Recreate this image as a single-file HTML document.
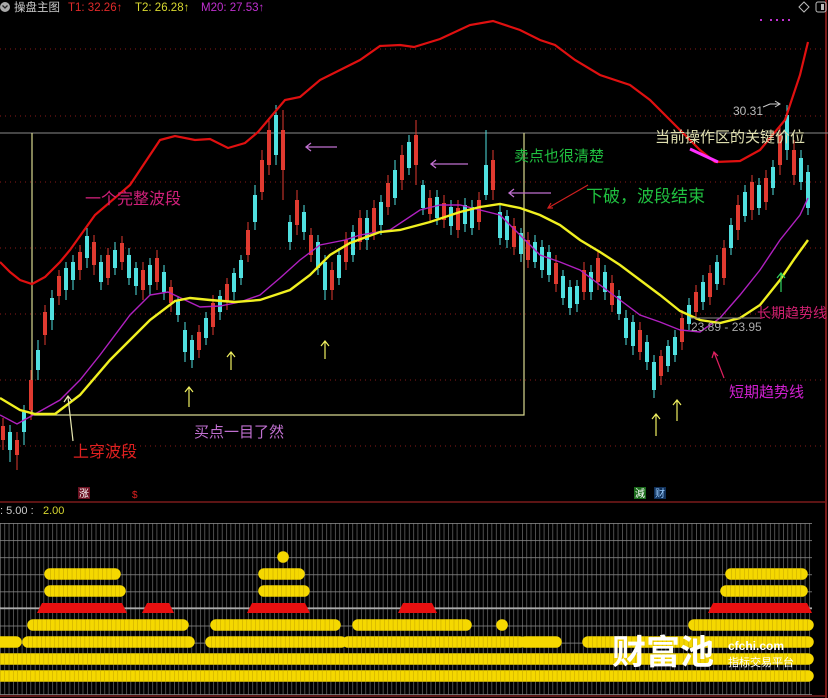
<!DOCTYPE html>
<html><head><meta charset="utf-8"><style>
html,body{margin:0;padding:0;background:#000;width:828px;height:698px;overflow:hidden}
svg{display:block}
text{font-family:"Liberation Sans","Noto Sans CJK SC",sans-serif}
</style></head><body>
<svg width="828" height="698" viewBox="0 0 828 698" xmlns="http://www.w3.org/2000/svg">
<defs>
<pattern id="gp" x="0" y="523" width="4.35" height="17.1" patternUnits="userSpaceOnUse">
<rect width="4.35" height="17.1" fill="#000"/>
<line x1="0.3" y1="0" x2="0.3" y2="17.1" stroke="#777" stroke-width="0.7"/>
<line x1="0" y1="0.4" x2="4.35" y2="0.4" stroke="#888" stroke-width="0.8"/>
</pattern>
</defs>
<rect width="828" height="698" fill="#000"/>
<g stroke="#8a1a1a" stroke-width="1" stroke-dasharray="1,4">
<line x1="0" y1="49" x2="826" y2="49"/><line x1="0" y1="116" x2="826" y2="116"/>
<line x1="0" y1="182" x2="826" y2="182"/><line x1="0" y1="248" x2="826" y2="248"/>
<line x1="0" y1="314" x2="826" y2="314"/><line x1="0" y1="380" x2="826" y2="380"/>
<line x1="0" y1="446" x2="826" y2="446"/>
</g>
<line x1="826" y1="0" x2="826" y2="698" stroke="#7a1a1a" stroke-width="2"/>
<line x1="0" y1="502" x2="826" y2="502" stroke="#7a1a1a" stroke-width="1.5"/>
<line x1="0" y1="696" x2="826" y2="696" stroke="#7a1a1a" stroke-width="1.5"/>
<line x1="0" y1="133" x2="828" y2="133" stroke="#8a8a8a" stroke-width="1"/>
<polyline points="32,133 32,415 524,415 524,133" stroke="#d8d890" stroke-width="1.2" fill="none"/>

<!-- candles: red -->
<g stroke="#e03a30">
<path stroke-width="1" d="M3,418V450M17,432V470M31,370V420M45,305V345M59,270V305M80,245V280M94,235V275M108,248V285M122,236V270M143,262V300M157,250V290M171,280V312M199,325V358M213,295V335M227,278V310M248,222V262M262,150V200M269,120V175M283,110V200M297,190V235M311,228V262M332,262V300M346,232V270M360,210V250M374,200V240M388,175V215M402,145V190M416,120V185M430,190V222M444,195V228M458,200V238M479,192V230M493,150V200M514,218V255M528,232V268M556,255V292M584,262V300M598,250V290M612,275V312M640,322V360M661,350V385M682,310V350M696,285V320M710,265V305M724,240V285M738,195V240M752,175V220M766,170V210M780,125V175M794,140V185"/>
<path stroke-width="4" d="M3,426V440M17,440V455M31,380V410M45,312V335M59,276V296M80,252V270M94,242V265M108,255V278M122,243V262M143,270V290M157,258V282M171,287V303M199,332V350M213,303V327M227,284V302M248,230V255M262,160V192M269,130V165M283,130V170M297,200V225M311,235V255M332,270V290M346,240V262M360,218V242M374,208V232M388,183V207M402,155V180M416,135V165M430,198V214M444,203V220M458,208V230M479,200V222M493,160V190M514,226V247M528,240V260M556,263V284M584,270V292M598,258V282M612,283V305M640,330V352M661,356V376M682,318V342M696,292V312M710,273V297M724,248V278M738,205V230M752,182V210M766,178V202M780,135V165M794,150V175"/>
</g>
<g stroke="#50e0e0">
<path stroke-width="1" d="M10,425V462M24,405V445M38,340V380M52,290V330M66,262V300M73,255V290M87,228V268M101,255V290M115,242V275M129,248V285M136,262V295M150,258V295M164,265V300M178,296V322M185,322V362M192,335V368M206,312V345M220,290V320M234,268V300M241,255V285M255,185V230M276,105V165M290,215V250M304,205V240M318,235V275M325,255V300M339,248V285M353,225V262M367,210V250M381,195V235M395,160V205M409,135V175M423,180V215M437,190V225M451,200V235M465,198V232M472,200V235M486,130V200M500,205V245M507,210V248M521,228V262M535,235V268M542,240V278M549,245V282M563,270V305M570,280V315M577,280V312M591,265V300M605,265V300M619,290V320M626,310V345M633,315V355M647,335V370M654,355V398M668,340V372M675,330V362M689,298V330M703,275V310M717,255V290M731,218V255M745,185V222M759,178V215M773,160V195M787,105V160M801,150V190M808,165V215"/>
<path stroke-width="4" d="M10,432V450M24,412V432M38,350V370M52,298V320M66,268V290M73,262V280M87,236V258M101,262V282M115,250V268M129,255V278M136,268V286M150,265V285M164,272V292M178,300V315M185,330V352M192,340V360M206,318V338M220,296V312M234,273V292M241,260V278M255,195V222M276,115V155M290,222V242M304,212V232M318,242V268M325,262V290M339,255V278M353,232V255M367,218V240M381,202V225M395,170V198M409,142V168M423,185V208M437,197V218M451,207V226M465,205V224M472,207V228M486,165V195M500,212V238M507,216V240M521,233V254M535,242V262M542,247V270M549,252V275M563,276V298M570,287V308M577,286V304M591,272V292M605,272V292M619,296V314M626,318V338M633,322V346M647,342V362M654,362V390M668,346V366M675,337V355M689,305V324M703,282V302M717,262V284M731,225V248M745,192V216M759,185V208M773,167V188M787,115V150M801,158V182M808,172V208"/>
</g>

<polyline fill="none" stroke="#e01010" stroke-width="2.2" points="0,262 10,272 20,280 32,284 45,277 60,262 70,250 95,215 130,185 160,140 175,136 195,140 210,139 228,148 245,143 258,132 285,100 300,97 320,80 360,60 380,46 400,45 414,47 440,39 470,25 493,21 520,30 540,40 555,45 575,60 600,75 630,85 650,100 680,130 700,150 715,162 740,161 760,150 785,120 800,75 808,42"/>
<polyline fill="none" stroke="#b020c0" stroke-width="1.4" points="0,415 17,424 35,414 60,400 80,380 100,355 130,315 150,295 168,292 185,300 200,307 220,306 240,302 260,295 280,278 300,260 320,245 345,240 360,235 390,230 420,210 440,205 460,205 480,210 500,215 520,235 540,255 560,262 580,270 600,285 620,300 640,315 660,322 680,330 700,332 720,318 740,295 760,270 780,240 800,215 808,198"/>
<polyline fill="none" stroke="#f0f020" stroke-width="2.4" points="0,398 20,410 35,414 55,414 80,395 110,360 150,320 175,301 190,298 210,300 235,302 260,300 290,290 310,275 330,255 350,243 380,232 400,230 430,222 460,212 480,207 500,204 520,208 540,215 560,225 580,240 600,252 620,265 640,280 660,295 680,311 700,320 720,323 740,318 760,305 780,280 795,258 808,240"/>

<g stroke="#f0f060" stroke-width="1.2" fill="none">
<path d="M189,407V387M185,392L189,387L193,392"/>
<path d="M231,370V352M227,357L231,352L235,357"/>
<path d="M325,359V341M321,346L325,341L329,346"/>
<path d="M656,436V414M652,419L656,414L660,419"/>
<path d="M677,421V400M673,405L677,400L681,405"/>
<path d="M73,441L68,397M64,402L68,396L72,401" stroke="#e8e8b0"/>
</g>
<path d="M781,292V273M777,278L781,273L785,278" stroke="#30d060" stroke-width="1.2" fill="none"/>
<g stroke="#c070d0" stroke-width="1.3" fill="none">
<path d="M337,147H306M311,143L306,147L311,151"/>
<path d="M468,164H431M436,160L431,164L436,168"/>
<path d="M551,193H509M514,189L509,193L514,197"/>
</g>
<path d="M588,185L548,208M553,208L548,208L551,203" stroke="#d02020" stroke-width="1.2" fill="none"/>
<path d="M724,378L714,352M712,358L714,352L718,356" stroke="#e02060" stroke-width="1.2" fill="none"/>
<path d="M690,149L718,162" stroke="#ff30ff" stroke-width="3"/>
<path d="M780,104h-10l-7,3M775,101l5,3l-5,3" stroke="#ccc" stroke-width="1" fill="none"/>
<line x1="690" y1="318" x2="760" y2="318" stroke="#888" stroke-width="1"/>

<circle cx="5" cy="7" r="5" fill="#aaa"/><path d="M2.5,5.5L5,8L7.5,5.5" stroke="#222" stroke-width="1.3" fill="none"/>
<text x="14" y="11" font-size="11.5" fill="#c8c8c8">操盘主图</text>
<text x="68" y="11" font-size="11.5" fill="#e02a2a">T1: 32.26↑</text>
<text x="135" y="11" font-size="11.5" fill="#d8d830">T2: 26.28↑</text>
<text x="201" y="11" font-size="11.5" fill="#c030d0">M20: 27.53↑</text>
<path d="M799,7l5-5l5,5l-5,5z" stroke="#bbb" fill="none"/>
<rect x="816" y="2" width="10" height="10" rx="2" stroke="#bbb" fill="none"/><rect x="821" y="4" width="3" height="6" fill="#bbb"/>
<g fill="#c030d0"><rect x="760" y="19" width="2" height="2"/><rect x="770" y="19" width="2" height="2"/><rect x="776" y="19" width="2" height="2"/><rect x="782" y="19" width="2" height="2"/><rect x="788" y="19" width="2" height="2"/></g>
<text x="85" y="204" font-size="16" fill="#d0207a">一个完整波段</text>
<text x="514" y="161" font-size="15" fill="#20c040">卖点也很清楚</text>
<text x="586" y="202" font-size="17" fill="#20c040">下破，波段结束</text>
<text x="655" y="142" font-size="15" fill="#e0e0b0">当前操作区的关键价位</text>
<text x="733" y="115" font-size="12" fill="#bbb">30.31</text>
<text x="691" y="331" font-size="12" fill="#aaa">23.89 - 23.95</text>
<text x="757" y="318" font-size="14" fill="#d02070">长期趋势线</text>
<text x="729" y="397" font-size="15" fill="#d020d0">短期趋势线</text>
<text x="194" y="437" font-size="15" fill="#c070d0">买点一目了然</text>
<text x="73" y="457" font-size="16" fill="#e02020">上穿波段</text>
<rect x="78" y="487" width="12" height="12" fill="#6a1020"/><text x="79" y="497" font-size="10" fill="#fff">涨</text>
<text x="132" y="498" font-size="10" fill="#e02020">$</text>
<rect x="634" y="487" width="12" height="12" fill="#1a6a1a"/><text x="635" y="497" font-size="10" fill="#fff">減</text>
<rect x="654" y="487" width="12" height="12" fill="#10305a"/><text x="655" y="497" font-size="10" fill="#9cf">财</text>
<text x="0" y="514" font-size="11" fill="#ccc">: 5.00 : </text>
<text x="43" y="514" font-size="11" fill="#d8d830">2.00</text>

<!-- lower panel -->
<rect x="0" y="523" width="812" height="172" fill="url(#gp)"/>
<line x1="0" y1="608" x2="812" y2="608" stroke="#ccc" stroke-width="1"/>
<g fill="#e81010">
<path d="M37,613L42,603L122,603L127,613Z"/><path d="M142,613L147,603L169,603L174,613Z"/>
<path d="M247,613L252,603L305,603L310,613Z"/><path d="M398,613L403,603L432,603L437,613Z"/>
<path d="M708,613L713,603L807,603L812,613Z"/>
</g>
<g stroke="#f5d800" stroke-width="11.5" stroke-linecap="round">
<path d="M283,557h0.1M50,574H115M264,574H299M731,574H802M50,591H120M264,591H304M726,591H802M33,625H183M216,625H335M358,625H466M502,625h0.1M694,625H808M0,642H16M28,642H189M211,642H341M348,642H520M525,642H556M588,642H808M0,659H808M0,676H808"/>
</g>
<g stroke="#c0a000" stroke-width="11" stroke-dasharray="0.6,3.75" opacity="0.8">
<path d="M50,574H115M264,574H299M731,574H802M50,591H120M264,591H304M726,591H802M33,625H183M216,625H335M358,625H466M694,625H808M28,642H189M211,642H341M348,642H520M588,642H808M0,659H808M0,676H808"/>
</g>
<text x="612" y="664" font-size="34" font-weight="bold" fill="#fff">财富池</text>
<text x="728" y="650" font-size="12" font-weight="bold" fill="#fff">cfchi.com</text>
<text x="728" y="666" font-size="11" fill="#fff">指标交易平台</text>
</svg>
</body></html>
